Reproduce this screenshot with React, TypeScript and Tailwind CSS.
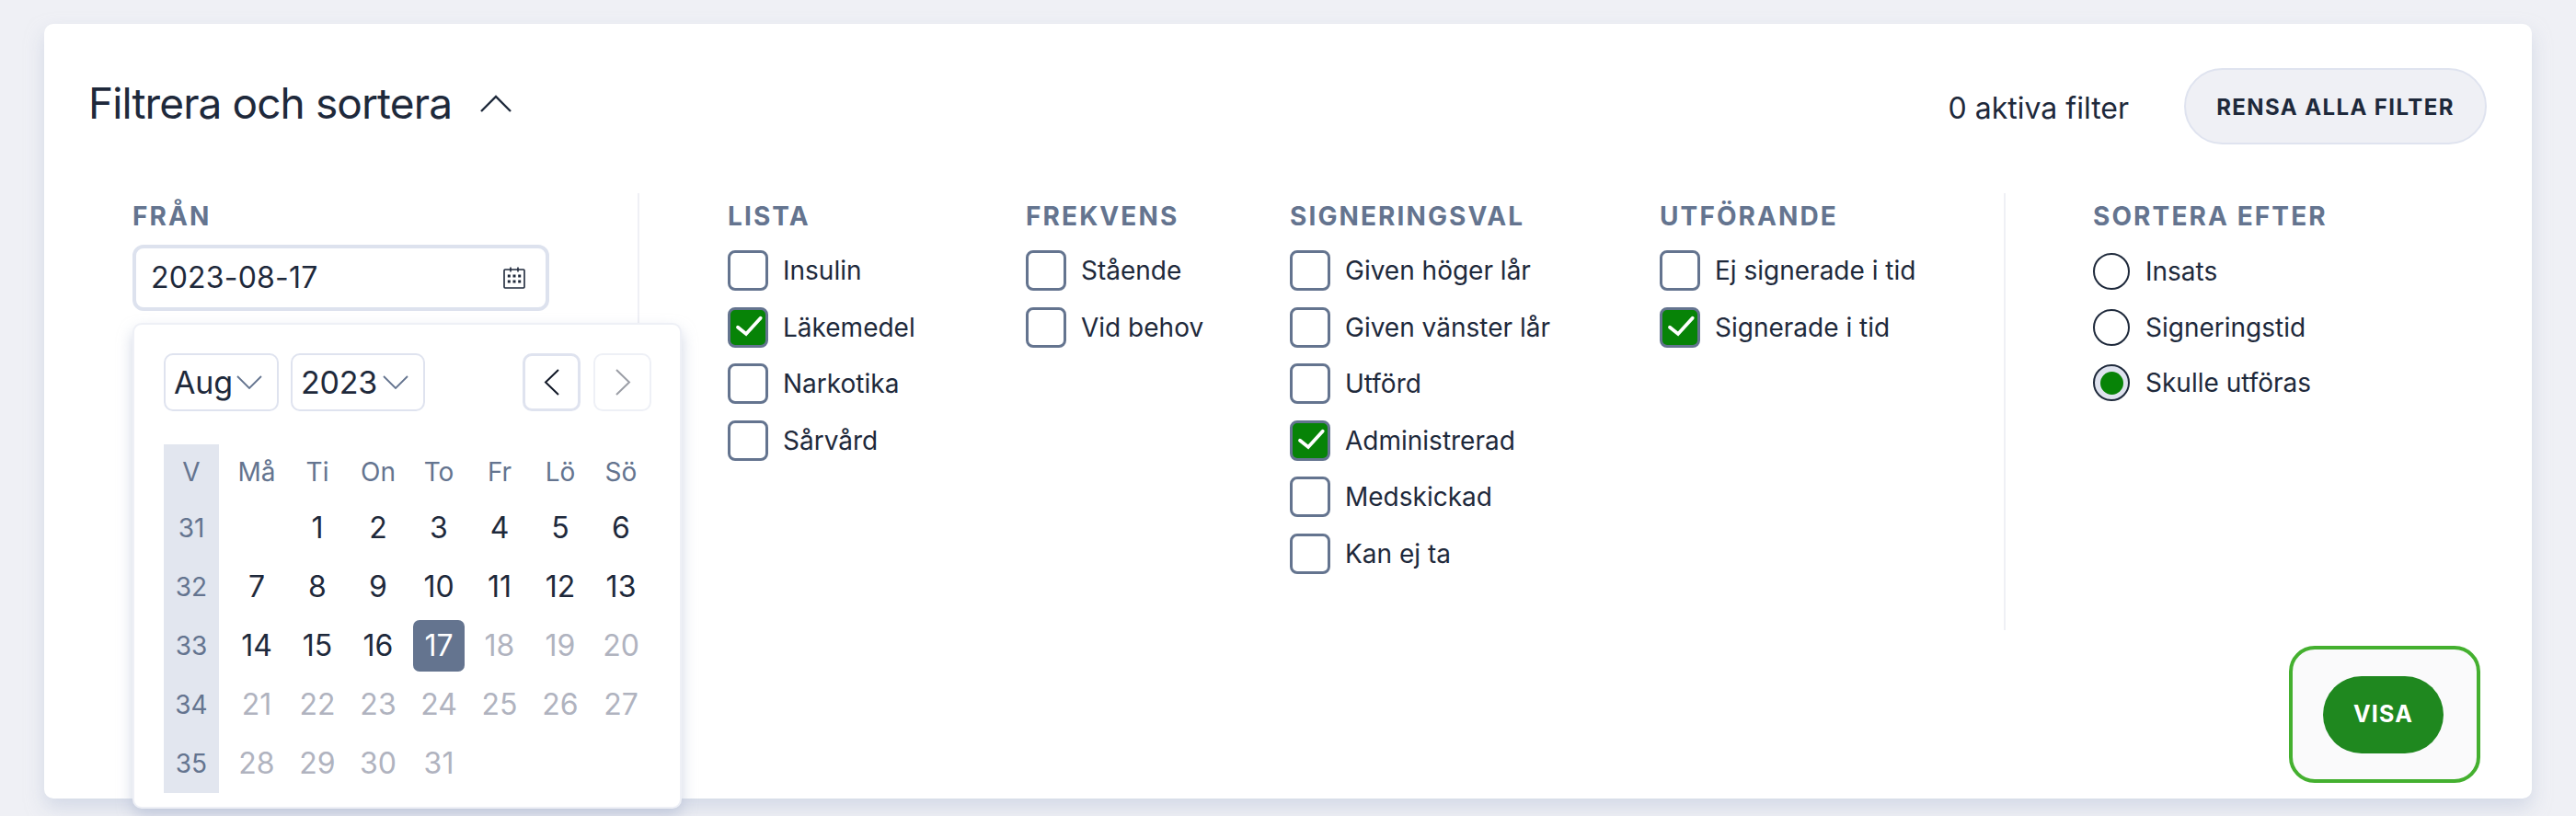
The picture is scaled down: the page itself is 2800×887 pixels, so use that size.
import React from 'react';

const LISTS = [
  { title: 'LISTA', width: 'w-[324px]', items: [['Insulin', false], ['Läkemedel', true], ['Narkotika', false], ['Sårvård', false]] },
  { title: 'FREKVENS', width: 'w-[287px]', items: [['Stående', false], ['Vid behov', false]] },
  {
    title: 'SIGNERINGSVAL',
    width: 'w-[402px]',
    items: [['Given höger lår', false], ['Given vänster lår', false], ['Utförd', false], ['Administrerad', true], ['Medskickad', false], ['Kan ej ta', false]],
  },
  { title: 'UTFÖRANDE', width: 'w-[374px]', items: [['Ej signerade i tid', false], ['Signerade i tid', true]] },
] as { title: string; width: string; items: [string, boolean][] }[];

const SORTS = [['Insats', false], ['Signeringstid', false], ['Skulle utföras', true]] as [string, boolean][];

const WEEKDAYS = ['Må', 'Ti', 'On', 'To', 'Fr', 'Lö', 'Sö'];

// null = blank cell before the 1st
const WEEKS: [number, (number | null)[]][] = [
  [31, [null, 1, 2, 3, 4, 5, 6]],
  [32, [7, 8, 9, 10, 11, 12, 13]],
  [33, [14, 15, 16, 17, 18, 19, 20]],
  [34, [21, 22, 23, 24, 25, 26, 27]],
  [35, [28, 29, 30, 31, null, null, null]],
];

function Heading({ children }: { children: React.ReactNode }) {
  return <div className="h-[38px] text-[28px] leading-[38px] font-bold tracking-[2.1px] text-[#64748f]">{children}</div>;
}

function Checkbox({ label, checked }: { label: string; checked: boolean }) {
  return (
    <div className="flex h-[44px] items-center gap-[16px]">
      <div
        className={`h-[44px] w-[44px] shrink-0 rounded-[8px] border-[3px] border-[#64748f] ${checked ? 'bg-[#078307]' : 'bg-white'}`}
      >
        {checked && (
          <svg width="38" height="38" viewBox="0 0 38 38" fill="none">
            <path d="M8 18.7 L17 26 L32.7 8.7" stroke="white" strokeWidth="3.8" strokeLinecap="round" strokeLinejoin="miter" />
          </svg>
        )}
      </div>
      <span className="text-[28px] text-[#1e293b]">{label}</span>
    </div>
  );
}

function Radio({ label, checked }: { label: string; checked: boolean }) {
  return (
    <div className="flex h-[40px] items-center gap-[17px]">
      <div
        className={`flex h-[40px] w-[40px] shrink-0 items-center justify-center rounded-full border-2 border-[#1e293b] ${checked ? 'bg-[#dfe3ef]' : 'bg-white'}`}
      >
        {checked && <div className="h-[25px] w-[25px] rounded-full bg-[#078307]" />}
      </div>
      <span className="text-[28px] text-[#1e293b]">{label}</span>
    </div>
  );
}

function CalendarIcon() {
  return (
    <svg width="24" height="24" viewBox="0 0 24 24" fill="none" stroke="#1e293b">
      <rect x="1" y="3" width="22" height="20" rx="1" strokeWidth="1.6" />
      <path d="M8 0.5 V5.5 M16 0.5 V5.5" strokeWidth="1.6" />
      <g fill="#1e293b" stroke="none">
        <rect x="4.8" y="8.5" width="3" height="3" />
        <rect x="10.5" y="8.5" width="3" height="3" />
        <rect x="16.2" y="8.5" width="3" height="3" />
        <rect x="4.8" y="14.5" width="3" height="3" />
        <rect x="10.5" y="14.5" width="3" height="3" />
        <rect x="16.2" y="14.5" width="3" height="3" />
      </g>
    </svg>
  );
}

function SelectBox({ value, width }: { value: string; width: string }) {
  return (
    <div className={`flex h-[63px] items-center justify-between rounded-[10px] border-2 border-[#dfe3ef] pr-[16px] pl-[9px] ${width}`}>
      <span className="text-[34px] tracking-[-0.2px] text-[#1e293b]">{value}</span>
      <svg width="28" height="15" viewBox="0 0 28 15" fill="none">
        <path d="M1 1 L14 14 L27 1" stroke="#64748f" strokeWidth="1.8" />
      </svg>
    </div>
  );
}

function DatePopup() {
  return (
    <div className="absolute top-[85px] left-0 z-10 h-[528px] w-[597px] rounded-[10px] border-2 border-[#eef0f6] bg-white pt-[31px] pl-[32px] shadow-[0_8px_16px_rgba(170,180,205,0.55)]">
      <div className="flex w-[530px] items-center gap-[13px]">
        <SelectBox value="Aug" width="w-[125px]" />
        <SelectBox value="2023" width="w-[146px]" />
        <div className="ml-auto flex gap-[14px]">
          <div className="flex h-[63px] w-[63px] items-center justify-center rounded-[10px] border-[3px] border-[#dfe3ef]">
            <svg width="18" height="29" viewBox="0 0 18 29" fill="none">
              <path d="M16 1 L2 14.5 L16 28" stroke="#111827" strokeWidth="2" />
            </svg>
          </div>
          <div className="flex h-[63px] w-[63px] items-center justify-center rounded-[10px] border-2 border-[#eef0f6]">
            <svg width="18" height="29" viewBox="0 0 18 29" fill="none">
              <path d="M2 1 L16 14.5 L2 28" stroke="#9b9ea6" strokeWidth="2" />
            </svg>
          </div>
        </div>
      </div>
      <div className="mt-[36px] grid w-[530px] grid-cols-[60px_8px_repeat(7,66px)] grid-rows-[59px_repeat(5,64px)] items-center justify-items-center">
        <div className="col-start-1 row-span-6 row-start-1 h-full w-full self-stretch bg-[#e2e6ef]" />
        <div className="col-start-1 row-start-1 text-[28px] text-[#64748f]">V</div>
        {WEEKDAYS.map((d, i) => (
          <div key={d} className="row-start-1 text-[28px] text-[#64748f]" style={{ gridColumnStart: i + 3 }}>
            {d}
          </div>
        ))}
        {WEEKS.map(([week, days], r) => (
          <React.Fragment key={week}>
            <div className="col-start-1 text-[28px] text-[#64748f]" style={{ gridRowStart: r + 2 }}>
              {week}
            </div>
            {days.map((d, i) =>
              d === null ? null : (
                <div
                  key={d}
                  className={`flex h-[56px] w-[56px] items-center justify-center rounded-[7px] text-[32px] ${
                    d === 17 ? 'bg-[#64748f] text-white' : d > 17 ? 'text-[#b0b3bf]' : 'text-[#1e293b]'
                  }`}
                  style={{ gridColumnStart: i + 3, gridRowStart: r + 2 }}
                >
                  {d}
                </div>
              ),
            )}
          </React.Fragment>
        ))}
      </div>
    </div>
  );
}

export default function App() {
  return (
    <div className="h-[887px] w-[2800px] overflow-hidden bg-[#eff0f5] px-[48px] pt-[26px] font-['Inter',sans-serif]">
      <div className="flex h-[842px] flex-col rounded-[10px] bg-white shadow-[0_10px_20px_rgba(190,198,218,0.55)]">
        {/* Header */}
        <div className="flex h-[131px] items-end justify-between pr-[49px] pl-[48px]">
          <div className="mb-[17px] flex items-center gap-[31px]">
            <h1 className="text-[46px] leading-[56px] font-normal tracking-[-0.9px] text-[#1e293b]">Filtrera och sortera</h1>
            <svg width="34" height="19" viewBox="0 0 34 19" fill="none">
              <path d="M1 18 L17 2 L33 18" stroke="#1e293b" strokeWidth="2.4" />
            </svg>
          </div>
          <div className="flex items-center gap-[60px]">
            <span className="mt-[5px] text-[32px] text-[#1e293b]">0 aktiva filter</span>
            <button className="h-[83px] w-[329px] rounded-full border-2 border-[#dfe3ef] bg-[#eff0f5] pt-[2px] text-[24px] font-bold tracking-[1.4px] text-[#1e293b]">
              RENSA ALLA FILTER
            </button>
          </div>
        </div>

        {/* Filters */}
        <div className="mt-[53px] ml-[48px] flex h-[475px]">
          <div className="w-[599px] border-r-2 border-[#eff0f5] pt-[6px] pl-[48px]">
            <Heading>FRÅN</Heading>
            <div className="relative mt-[12px] w-[453px]">
              <div className="flex h-[72px] items-center justify-between rounded-[12px] border-4 border-[#dde2ee] pr-[22px] pl-[16px]">
                <span className="text-[32px] tracking-[0.2px] text-[#1e293b]">2023-08-17</span>
                <CalendarIcon />
              </div>
              <DatePopup />
            </div>
          </div>
          <div className="flex w-[1485px] border-r-2 border-[#eff0f5] pt-[6px] pl-[96px]">
            {LISTS.map(col => (
              <div key={col.title} className={col.width}>
                <Heading>{col.title}</Heading>
                <div className="mt-[18px] flex flex-col gap-[17.6px]">
                  {col.items.map(([label, checked]) => (
                    <Checkbox key={label} label={label} checked={checked} />
                  ))}
                </div>
              </div>
            ))}
          </div>
          <div className="pt-[6px] pl-[95px]">
            <Heading>SORTERA EFTER</Heading>
            <div className="mt-[21px] flex flex-col gap-[20.5px]">
              {SORTS.map(([label, checked]) => (
                <Radio key={label} label={label} checked={checked} />
              ))}
            </div>
          </div>
        </div>

        {/* Submit */}
        <div className="mt-[17px] flex justify-end pr-[56px]">
          <div className="flex h-[149px] w-[208px] items-center justify-center rounded-[28px] border-4 border-[#44b02f] bg-[#fafafb] pr-[3px]">
            <button className="h-[84px] w-[131px] rounded-full bg-[#1f881f] text-[25px] font-bold tracking-[1.2px] text-white">VISA</button>
          </div>
        </div>
      </div>
    </div>
  );
}
